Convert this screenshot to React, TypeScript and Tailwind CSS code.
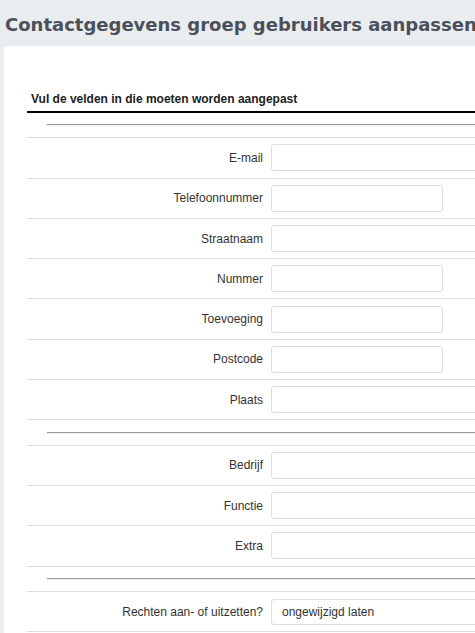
import React from "react";

type Field = {
  label: string;
  narrow?: boolean;
};

const groupOne: Field[] = [
  { label: "E-mail" },
  { label: "Telefoonnummer", narrow: true },
  { label: "Straatnaam" },
  { label: "Nummer", narrow: true },
  { label: "Toevoeging", narrow: true },
  { label: "Postcode", narrow: true },
  { label: "Plaats" },
];

const groupTwo: Field[] = [
  { label: "Bedrijf" },
  { label: "Functie" },
  { label: "Extra" },
];

const Separator = ({ first }: { first?: boolean }) => (
  <div
    className={`h-[24.3px] box-content flex items-center pl-5 ${
      first ? "" : "border-t border-[#dedede]"
    }`}
  >
    <div className="w-full h-[2px] border-t border-[#9b9b9b] border-b border-b-[#eeeeee]" />
  </div>
);

const Row = ({ label, children }: { label: string; children: React.ReactNode }) => (
  <div className="h-[39.3px] box-content border-t border-[#dedede] flex items-center">
    <div className="w-[244px] text-right pr-2 text-[12px] text-[#333]">{label}</div>
    {children}
  </div>
);

const FieldInput = ({ narrow }: { narrow?: boolean }) => (
  <input
    type="text"
    className={`h-[27px] border border-[#dddddd] rounded-[3px] bg-white outline-none ${
      narrow ? "w-[172px]" : "w-[320px]"
    }`}
  />
);

export default function App() {
  return (
    <div
      className="w-[475px] h-[633px] overflow-hidden bg-[#eaedf0]"
      style={{ fontFamily: '"Liberation Sans", Arial, sans-serif' }}
    >
      <h1
        className="pl-[5px] pt-[11px] h-[46px] text-[18px] font-bold text-[#4b5059] whitespace-nowrap"
        style={{ fontFamily: '"DejaVu Sans", Verdana, sans-serif' }}
      >
        Contactgegevens groep gebruikers aanpassen
      </h1>
      <div className="ml-[4px] w-[700px] bg-white rounded-tl-[3px] pt-[41px] pl-[23px] min-h-[600px]">
        <div className="h-[26px] border-b-2 border-black flex items-center pl-1 text-[12px] font-bold text-[#222]">
          Vul de velden in die moeten worden aangepast
        </div>
        <Separator first />
        {groupOne.map((f) => (
          <Row key={f.label} label={f.label}>
            <FieldInput narrow={f.narrow} />
          </Row>
        ))}
        <Separator />
        {groupTwo.map((f) => (
          <Row key={f.label} label={f.label}>
            <FieldInput narrow={f.narrow} />
          </Row>
        ))}
        <Separator />
        <Row label="Rechten aan- of uitzetten?">
          <div className="h-[26px] w-[320px] border border-[#dddddd] rounded-[3px] flex items-center pl-[10px] text-[12px] text-[#333]">
            ongewijzigd laten
          </div>
        </Row>
        <div className="border-t border-[#dedede]" />
      </div>
    </div>
  );
}
